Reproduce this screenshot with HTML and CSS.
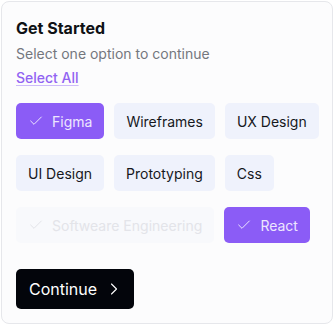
FILE: index.html
```html
<!DOCTYPE html>
<html lang="en">
<head>
<meta charset="utf-8">
<title>Get Started</title>
<link rel="stylesheet" href="styles.css">
</head>
<body>
<div class="card">
  <h1 class="title">Get Started</h1>
  <p class="subtitle">Select one option to continue</p>
  <a class="select-all" href="#">Select All</a>
  <div class="chips">
    <button class="chip selected"><svg class="check" viewBox="0 0 24 24"><path d="M20 6 9 17l-5-5"/></svg>Figma</button>
    <button class="chip">Wireframes</button>
    <button class="chip">UX Design</button>
    <button class="chip">UI Design</button>
    <button class="chip">Prototyping</button>
    <button class="chip">Css</button>
    <button class="chip disabled"><svg class="check" viewBox="0 0 24 24"><path d="M20 6 9 17l-5-5"/></svg>Softweare Engineering</button>
    <button class="chip selected"><svg class="check" viewBox="0 0 24 24"><path d="M20 6 9 17l-5-5"/></svg>React</button>
  </div>
  <button class="continue">Continue<svg class="chev" viewBox="0 0 24 24"><path d="m9 18 6-6-6-6"/></svg></button>
</div>
</body>
</html>
```
FILE: styles.css
```css
* { box-sizing: border-box; }
html, body { margin: 0; background: #ffffff; }
body { padding: 1px; font-family: Inter, "Noto Sans", sans-serif; color: #111113; }
.card {
  width: 332px;
  height: 323px;
  border: 1px solid #e6e7eb;
  border-radius: 8px;
  background: #fcfcfd;
  padding: 14px 14px 13px;
  display: flex;
  flex-direction: column;
  align-items: flex-start;
}
.title {
  margin: 0;
  font-size: 16px;
  line-height: 24px;
  font-weight: 700;
  color: #0f1115;
}
.subtitle {
  margin: 4px 0 0;
  font-size: 14px;
  line-height: 20px;
  color: #74777e;
}
.select-all {
  margin-top: 4px;
  font-size: 14px;
  line-height: 20px;
  font-weight: 500;
  color: #9163f2;
  text-decoration: underline;
  text-decoration-color: #cdbcf9;
  text-underline-offset: 2px;
}
.chips {
  margin-top: 15px;
  display: flex;
  flex-wrap: wrap;
  column-gap: 10px;
  row-gap: 16px;
  width: 304px;
}
.chip {
  height: 36px;
  padding: 0 12px;
  border: none;
  border-radius: 5px;
  background: #eff2fc;
  font-family: inherit;
  font-size: 14px;
  color: #16181d;
  display: flex;
  align-items: center;
  gap: 8px;
}
.chip .check {
  width: 16px;
  height: 16px;
  fill: none;
  stroke: currentColor;
  stroke-width: 1.5;
  stroke-linecap: round;
  stroke-linejoin: round;
}
.chip.selected {
  background: #8b5cf6;
  color: #ede6fe;
}
.chip.disabled {
  background: #f8f9fc;
  color: #e3e4e9;
}
.continue {
  margin-top: 26px;
  height: 40px;
  padding: 0 10px 0 13px;
  border: none;
  border-radius: 5px;
  background: #03050b;
  color: #ffffff;
  font-family: inherit;
  font-size: 16px;
  display: flex;
  align-items: center;
  gap: 7px;
}
.continue .chev {
  width: 20px;
  height: 20px;
  fill: none;
  stroke: currentColor;
  stroke-width: 1.3;
  stroke-linecap: round;
  stroke-linejoin: round;
}
```
